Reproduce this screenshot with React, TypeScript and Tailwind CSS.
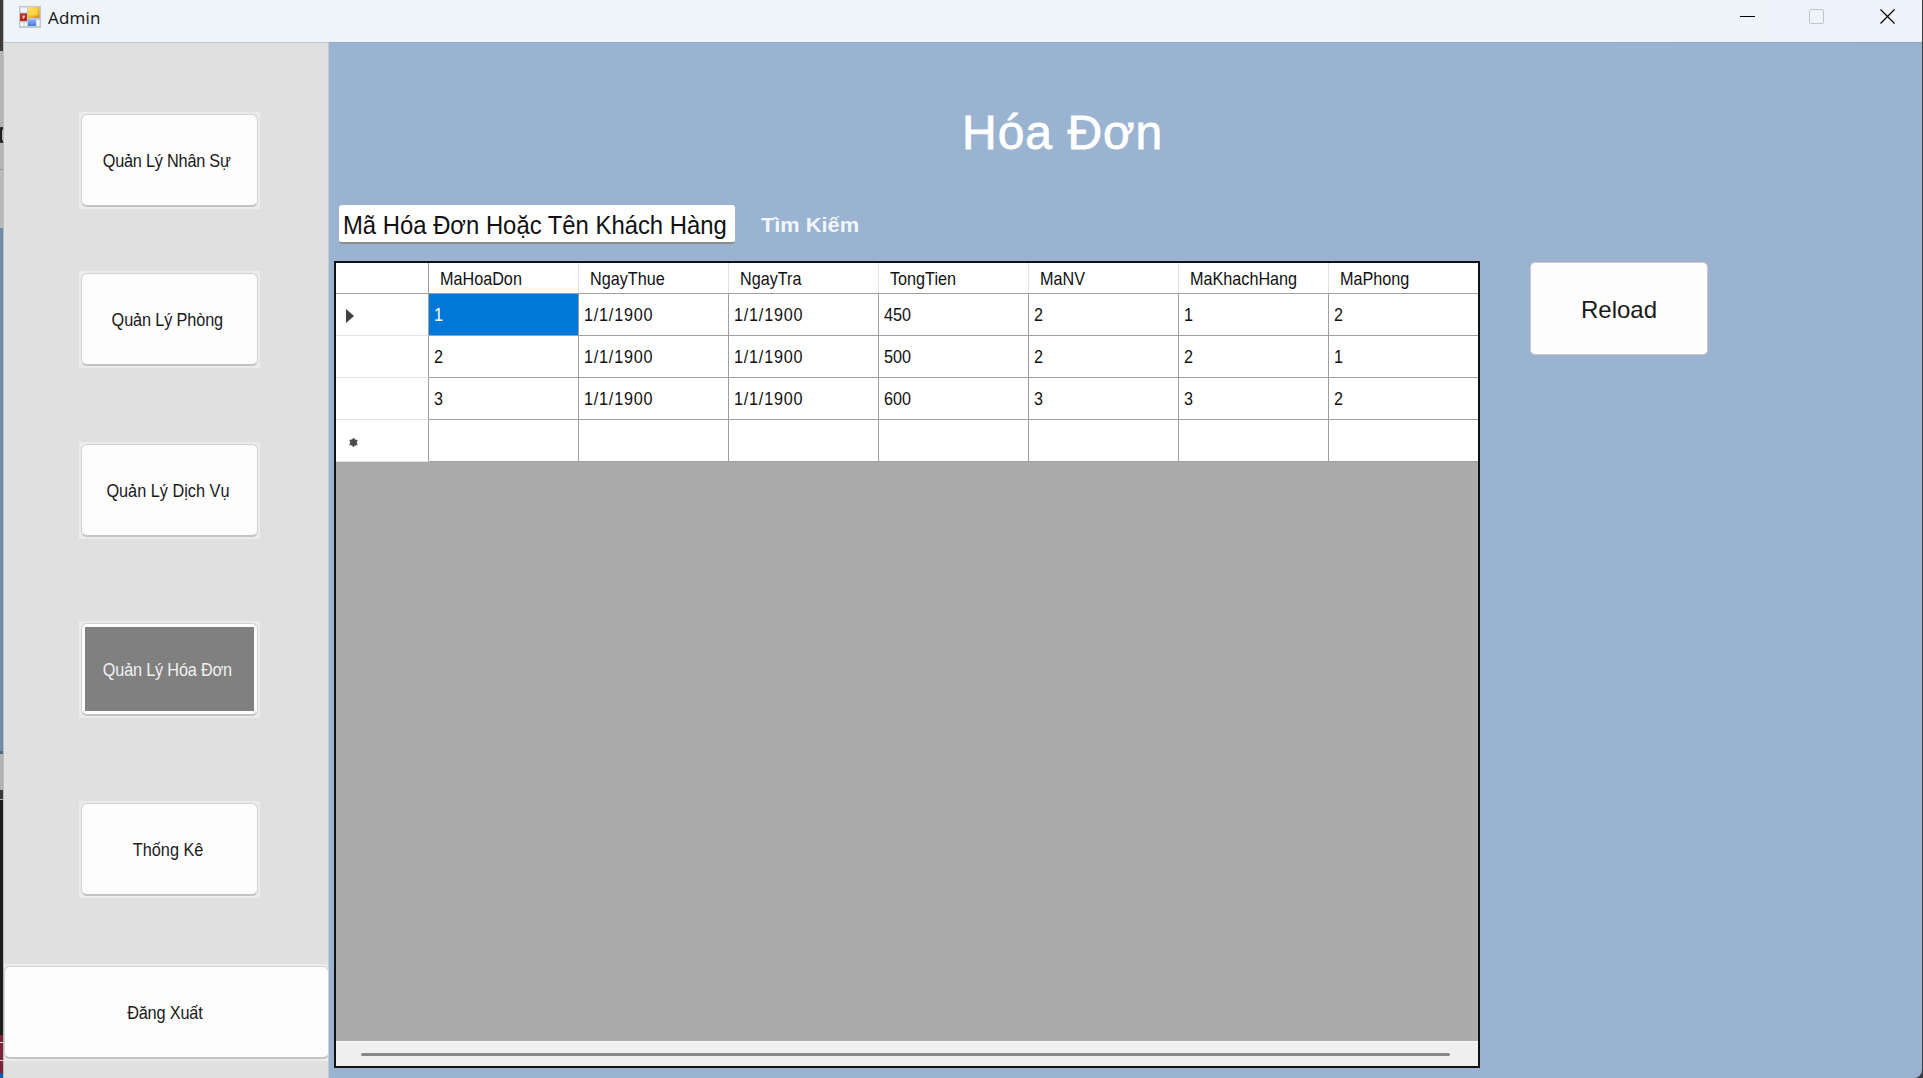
import React from "react";

const columns = ["MaHoaDon", "NgayThue", "NgayTra", "TongTien", "MaNV", "MaKhachHang", "MaPhong"];

const rows = [
  ["1", "1/1/1900", "1/1/1900", "450", "2", "1", "2"],
  ["2", "1/1/1900", "1/1/1900", "500", "2", "2", "1"],
  ["3", "1/1/1900", "1/1/1900", "600", "3", "3", "2"],
  ["", "", "", "", "", "", ""],
];

const gridCols = "grid grid-cols-[93px_150px_150px_150px_150px_150px_150px_150px]";

function AppIcon() {
  return (
    <svg width="22" height="22" viewBox="0 0 22 22" className="shrink-0">
      <defs>
        <linearGradient id="gold" x1="0" y1="0" x2="1" y2="1">
          <stop offset="0" stopColor="#ffe88c" />
          <stop offset="0.5" stopColor="#f6c624" />
          <stop offset="1" stopColor="#c98f00" />
        </linearGradient>
        <linearGradient id="blue" x1="0" y1="0" x2="0" y2="1">
          <stop offset="0" stopColor="#8ab4f5" />
          <stop offset="1" stopColor="#3f78dc" />
        </linearGradient>
      </defs>
      <rect x="0" y="0" width="22" height="22" fill="#c4c8cc" />
      <rect x="1.5" y="1.5" width="6.5" height="5" fill="#eef3f6" />
      <rect x="1.5" y="16.5" width="3" height="3.5" fill="#f5f7f8" />
      <rect x="5.5" y="16.5" width="2.5" height="3.5" fill="#f5f7f8" />
      <rect x="17.5" y="14" width="3" height="6" fill="#f5f7f8" />
      <rect x="1" y="7.5" width="7" height="7.5" fill="#c0281c" />
      <path d="M3.200 9.500h2.800v2H5V13H4v-1.500h-.8z" fill="#f2b3a6" />
      <rect x="9" y="1" width="11.500" height="11" fill="url(#gold)" />
      <rect x="11" y="3" width="7.500" height="6.500" fill="#ffdc55" opacity="0.7" />
      <rect x="9" y="13.500" width="8" height="6.500" fill="url(#blue)" />
    </svg>
  );
}

function NavButton({ label, gap, text, active }: { label: string; gap: string; text: string; active?: boolean }) {
  return (
    <div className={`${gap} ml-[75px] h-[97px] w-[181px] shrink-0 bg-[#ebebeb] p-[2px]`}>
      <button
        className={`flex h-[93px] w-[177px] rounded-[6px] border border-b-2 border-[#d2d2d2] border-b-[#c3c3c3] bg-[#fdfdfd] ${active ? "p-[3px]" : ""}`}
      >
        <span
          className={`flex size-full items-center justify-center pt-px text-[18.5px] whitespace-nowrap ${text} ${active ? "bg-[#808080] text-[#f0f0f0]" : "text-[#1a1a1a]"}`}
        >
          <span className="scale-x-[0.88]">{label}</span>
        </span>
      </button>
    </div>
  );
}

/* Sliver of the windows that sit behind this one. */
function BackgroundEdge() {
  return (
    <div className="flex w-[3px] shrink-0 flex-col overflow-hidden">
      <div className="h-[51px] shrink-0 bg-[#3c3c3c]" />
      <div className="h-[76px] shrink-0 bg-[#b4b4b4]" />
      <div className="h-4 w-[5px] shrink-0 rounded-l-[4px] border-2 border-[#1c1c1c] bg-[#b4b4b4]" />
      <div className="h-[27px] shrink-0 border-b border-[#999] bg-[#b4b4b4]" />
      <div className="h-[58px] shrink-0 bg-[#b9b9b9]" />
      <div className="h-[523px] shrink-0 bg-[#738ba6]" />
      <div className="h-[3px] shrink-0 bg-[#566878]" />
      <div className="h-9 shrink-0 bg-[#b2b2b2]" />
      <div className="h-[10px] shrink-0 border-b border-[#aaa] bg-[#383838]" />
      <div className="h-[235px] shrink-0 bg-[#1d1d1d]" />
      <div className="h-[7px] shrink-0 bg-[#7c2239]" />
      <div className="h-px shrink-0 bg-[#d8d8d8]" />
      <div className="h-[17px] shrink-0 bg-[#7c2239]" />
      <div className="h-px shrink-0 bg-[#d8d8d8]" />
      <div className="h-3 shrink-0 bg-[#7c2239]" />
      <div className="grow bg-[#1458b0]" />
    </div>
  );
}

export default function App() {
  return (
    <div className="flex h-[1078px] w-[1923px] overflow-hidden bg-[#3c3c3c] font-['Liberation_Sans',Arial,sans-serif]">
      <BackgroundEdge />
      <div className="flex w-[1919px] shrink-0 flex-col overflow-hidden rounded-br-[8px] border-l border-[#bcbcbc] bg-[#99b3d1]">
        <header className="flex h-[42px] shrink-0 items-start justify-between bg-linear-to-r from-[#eef4f8] via-[#eff4f8] to-[#eef3fb]">
          <div className="flex pt-[6px] pl-[15px]">
            <AppIcon />
            <span className="ml-[7px] font-['Open_Sans',sans-serif] text-[17px] leading-[23px] tracking-[0.2px] text-[#111]">
              Admin
            </span>
          </div>
          <div className="flex pt-[9px] pr-[26px]">
            <svg width="156" height="15" viewBox="0 0 156 15" fill="none">
              <path d="M0 7.500h15" stroke="#000" />
              <rect x="69.500" y="0.500" width="14" height="14" rx="1.500" stroke="#bfc3c8" />
              <path d="M140.500 0.500l14 14M154.500 0.500l-14 14" stroke="#000" strokeWidth="1.200" />
            </svg>
          </div>
        </header>
        <div className="flex min-h-0 grow">
          <aside className="flex w-[325px] shrink-0 flex-col border-t border-r border-t-[#c6c8ca] border-r-[#c3ccd6] bg-[#e0e0e0]">
            <NavButton label="Quản Lý Nhân Sự" gap="mt-[69px]" text="tracking-[-0.25px] pr-[5px]" />
            <NavButton label="Quản Lý Phòng" gap="mt-[62px]" text="tracking-[-0.15px] pr-[5px]" />
            <NavButton label="Quản Lý Dịch Vụ" gap="mt-[74px]" text="tracking-normal pr-[3px]" />
            <NavButton label="Quản Lý Hóa Đơn" gap="mt-[82px]" text="tracking-[-0.22px] pr-[5px]" active />
            <NavButton label="Thống Kê" gap="mt-[83px]" text="tracking-normal pr-[2px]" />
            <div className="mt-[66px] h-[97px] shrink-0 bg-[#ebebeb] pt-[2px]">
              <button className="flex h-[93px] w-[325px] items-center justify-center rounded-[6px] border border-b-2 border-[#d2d2d2] border-b-[#c3c3c3] bg-[#fdfdfd] pt-px pr-[3px] text-[18.5px] tracking-[-0.2px] text-[#1a1a1a]">
                <span className="scale-x-[0.88]">Đăng Xuất</span>
              </button>
            </div>
          </aside>
          <main className="flex grow flex-col border-t border-[#90a9c5] pl-[5px]">
            <h1 className="mt-[62px] ml-[628px] h-[56px] text-[48px] leading-[56px] tracking-[1px] whitespace-nowrap text-white [-webkit-text-stroke:0.8px_white]">
              Hóa Đơn
            </h1>
            <div className="mt-[44px] ml-[5px] flex h-[39px] items-center">
              <div className="flex h-[39px] w-[396px] items-center rounded-[3px] border-b-2 border-[#8c8c8c] bg-white pt-[4px] pl-[4px] text-[25px] whitespace-nowrap text-[#111]">
                <span className="origin-left scale-x-[0.954]">Mã Hóa Đơn Hoặc Tên Khách Hàng</span>
              </div>
              <span className="ml-[26px] origin-left scale-x-[1.09] pt-px text-[20px] font-bold text-[#f4f6fa]">
                Tìm Kiếm
              </span>
            </div>
            <div className="mt-[17px] flex items-start">
              <div className="flex h-[807px] w-[1146px] flex-col overflow-hidden border-2 border-[#111] bg-[#ababab]">
                <div className={`${gridCols} h-[31px] shrink-0 border-b border-[#a0a0a0] bg-white text-[18.5px] text-[#111]`}>
                  <div className="border-r border-[#a0a0a0]" />
                  {columns.map((c) => (
                    <div key={c} className="flex items-center border-r border-[#e2e2e2] pt-[2px] pl-[11px]">
                      <span className="origin-left scale-x-[0.875]">{c}</span>
                    </div>
                  ))}
                </div>
                {rows.map((r, i) => (
                  <div key={i} className={`${gridCols} h-[42px] shrink-0 text-[18.5px] text-[#111]`}>
                    <div className="flex items-center border-r border-b border-r-[#a0a0a0] border-b-[#e5e5e5] bg-white">
                      {i === 0 && (
                        <svg width="8" height="14" viewBox="0 0 8 14" className="mt-[2px] ml-[10px]">
                          <path d="M0 0L8 7L0 14z" fill="#404040" />
                        </svg>
                      )}
                      {i === 3 && (
                        <svg width="9" height="9" viewBox="0 0 9 9" className="mt-1 ml-[13px]">
                          <path d="M4.500 0v9M0.500 2.200l8 4.600M0.500 6.800l8-4.600" stroke="#666" strokeWidth="1.600" />
                          <circle cx="4.500" cy="4.500" r="3.400" fill="#4a4a4a" />
                        </svg>
                      )}
                    </div>
                    {r.map((v, j) => (
                      <div
                        key={j}
                        className={`flex items-center border-r border-b border-[#a0a0a0] pl-[5px] ${i === 0 && j === 0 ? "bg-[#0078d7] text-white" : "bg-white"}`}
                      >
                        <span
                          className={`origin-left scale-x-[0.875] ${j === 1 || j === 2 ? "tracking-[0.9px]" : "tracking-normal"}`}
                        >
                          {v}
                        </span>
                      </div>
                    ))}
                  </div>
                ))}
                <div className="mt-auto flex h-[25px] shrink-0 items-center border-t border-[#f8f8f8] bg-[#efefef] pr-[28px] pl-[25px]">
                  <div className="h-[3px] w-full rounded-full bg-[#888]" />
                </div>
              </div>
              <button className="mt-[1px] ml-[50px] flex h-[93px] w-[178px] items-center justify-center rounded-[5px] border border-[#c8c8c8] bg-[#fdfdfd] pt-[2px] text-[24px] text-[#1a1a1a]">
                Reload
              </button>
            </div>
          </main>
        </div>
      </div>
    </div>
  );
}
